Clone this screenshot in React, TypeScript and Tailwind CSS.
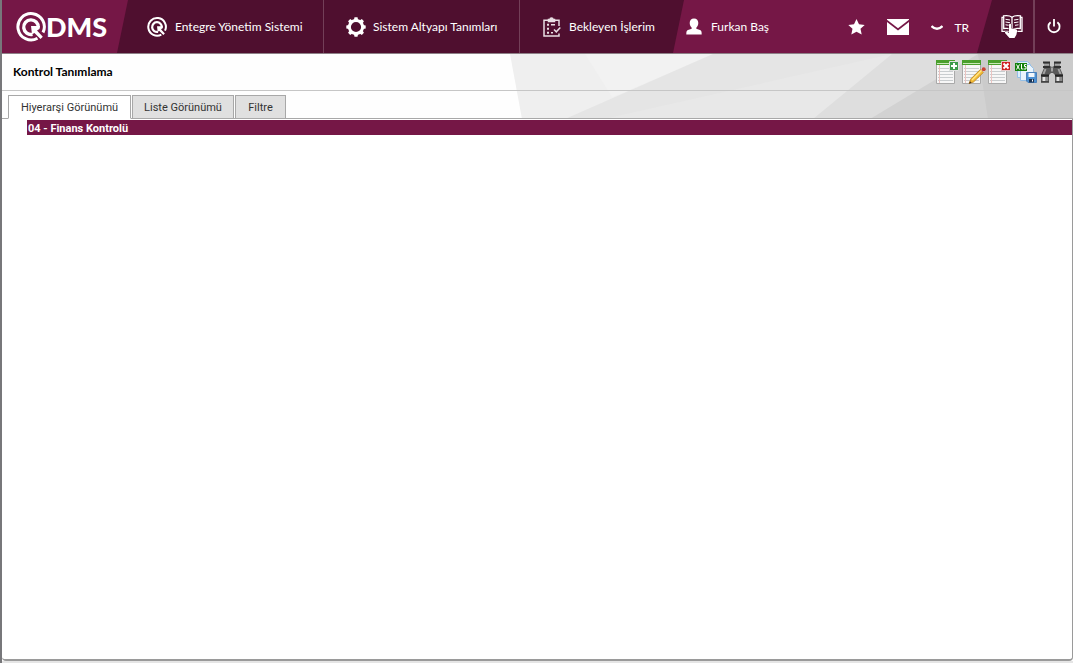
function QMark({ size }: { size: number }) {
  return (
    <svg width={size} height={size} viewBox="0 0 30 30" fill="none" aria-hidden="true">
      <path d="M21.500 26.300 A13.200 13.200 0 1 1 27 20.500" stroke="#fff" strokeWidth="3" />
      <path d="M16.500 22.300 A7.300 7.300 0 1 1 22.300 15.500" stroke="#fff" strokeWidth="3.400" />
      <path d="M15 14H24L23.500 17L21 18.500L26.800 24.800L24.500 27L18.500 21L16 22.300z" fill="#fff" />
    </svg>
  );
}

function GearIcon() {
  return (
    <svg width="20" height="20" viewBox="0 0 20 20" aria-hidden="true">
      <g fill="#fff">
        {[0, 45, 90, 135, 180, 225, 270, 315].map((a) => (
          <path key={a} d="M7.700 4 L8.500 0.300 H11.500 L12.300 4z" transform={`rotate(${a} 10 10)`} />
        ))}
      </g>
      <circle cx="10" cy="10" r="6.600" fill="none" stroke="#fff" strokeWidth="3" />
    </svg>
  );
}

function TasksIcon() {
  return (
    <svg width="18" height="20" viewBox="0 0 18 20" fill="none" stroke="#e9dfe4" strokeWidth="1.500" aria-hidden="true">
      <path d="M5 3.200 H1 V19 H16 V16.500 M12 3.200 H16 V9" />
      <path d="M5.500 4.500 V2.500 H7 A1.500 1.500 0 0 1 10 2.500 H11.500 V4.500z" fill="#e9dfe4" />
      <path d="M4 7.700h2M4 11.700h2M4 15.700h2" strokeWidth="2" />
      <path d="M8 7.700h4M8 15.700h2" />
      <path d="M11 12.500 l2.300 2.300 L17.300 10.500" />
    </svg>
  );
}

function UserIcon() {
  return (
    <svg width="16" height="17" viewBox="0 0 16 17" fill="#fff" aria-hidden="true">
      <path d="M8 0.500c2.800 0 4.300 2 4.300 4.500 0 2.300-.9 3.700-2 4.700v1l3.700 1.400c1.300.5 1.700 1.500 1.700 4.400H.3c0-2.900.4-3.900 1.700-4.400l3.700-1.400v-1c-1.100-1-2-2.400-2-4.700C3.700 2.500 5.200.5 8 .5z" />
    </svg>
  );
}

function StarIcon() {
  return (
    <svg width="17" height="16" viewBox="0 0 17 16" fill="#fff" aria-hidden="true">
      <path d="M8.500 0 L11 5.300 16.700 5.900 12.500 9.800 13.700 15.600 8.500 12.700 3.300 15.600 4.500 9.800 .3 5.900 6 5.300z" />
    </svg>
  );
}

function MailIcon() {
  return (
    <svg width="22" height="16" viewBox="0 0 22 16" fill="#fff" aria-hidden="true">
      <path d="M0 0H22V.8L11 9.300 0 .8z" />
      <path d="M0 3L11 11.500 22 3V16H0z" />
    </svg>
  );
}

function BookIcon() {
  return (
    <svg width="22" height="23" viewBox="0 0 22 23" aria-hidden="true">
      <g fill="none" stroke="#fff" strokeWidth="1.300">
        <path d="M8 16.300H1V2.300H2.500V.9C6 .4 9 .6 11 2.300 13 .6 16 .4 19.500.9V2.300H21V16.300H15" />
        <path d="M2.700 2V13.500C6 13 8 13.200 11 14.500 14 13.200 16 13 19.300 13.500V2M11 2.300V14" />
        <path d="M4.500 4.300L9 5M4.500 7L9 7.700M4.500 9.800L8 10.300M17.500 4.300L13 5M17.500 7L13 7.700M17.500 9.800L14 10.300" strokeWidth="1" />
      </g>
      <path d="M8 9.800c0-1.500 2.300-1.500 2.300 0v3.700l4.500.8c1 .2 1.400.9 1.300 1.900l-.7 3.600L13.500 23H8.500L4.200 18.200c-.9-1.400.6-2.300 1.700-1.400L8 18z" fill="#fff" stroke="#4f0f2f" strokeWidth=".8" paintOrder="stroke" />
    </svg>
  );
}

function PowerIcon() {
  return (
    <svg width="14" height="15" viewBox="0 0 14 15" fill="none" stroke="#fff" strokeWidth="1.800" aria-hidden="true">
      <path d="M3.600 3.200A5.600 5.600 0 1 0 10.400 3.200M7 0V7.500" />
    </svg>
  );
}

function Sheet() {
  return (
    <>
      <path d="M.5 2.500h18v21H.5z" fill="#f7f7f7" stroke="#a9a9a9" />
      <path d="M2 8.500h15M2 11.500h15M2 14.500h15M2 17.500h15M2 20.500h15" stroke="#c9cdcf" />
      <path d="M3.500 5v18" stroke="#ebc4c1" />
      <path d="M0 0h19v5H0z" fill="#4a9f2c" />
      <path d="M1 3h17v1H1z" fill="#c7e8b6" />
    </>
  );
}

function AddIcon() {
  return (
    <svg width="24" height="24" viewBox="0 0 24 24" aria-hidden="true">
      <Sheet />
      <path d="M13.500 1.500h9v9h-9z" fill="#3d9a4b" stroke="#e2e2e2" />
      <path d="M18 3v6M15 6h6" stroke="#fff" strokeWidth="2" />
    </svg>
  );
}

function EditIcon() {
  return (
    <svg width="24" height="24" viewBox="0 0 24 24" aria-hidden="true">
      <Sheet />
      <path d="M7 23.500L9 18.800 18.500 9.300 21.500 12.300 11.500 22z" fill="#f3bd35" stroke="#ba7d16" strokeWidth=".8" />
      <path d="M10 20L19.500 10.500" stroke="#ffe58b" strokeWidth="1.200" />
      <path d="M18.500 9.300l1.500-1.400 3 3-1.500 1.400z" fill="#d7dadc" />
      <circle cx="21.700" cy="9.200" r="2" fill="#c94335" />
      <path d="M7 23.700l1-2.500 1.600 1.500z" fill="#4a321b" />
    </svg>
  );
}

function DeleteIcon() {
  return (
    <svg width="24" height="24" viewBox="0 0 24 24" aria-hidden="true">
      <Sheet />
      <path d="M13.500 1.500h9v9h-9z" fill="#ce2021" stroke="#e8caca" />
      <path d="M15.500 3.500l5 5M20.500 3.500l-5 5" stroke="#fff" strokeWidth="2" />
    </svg>
  );
}

function ExportIcon() {
  return (
    <svg width="24" height="24" viewBox="0 0 24 24" aria-hidden="true">
      <path d="M3.500 1.500h10l3 3v13h-13z" fill="#dcecfa" stroke="#94bfe6" />
      <path d="M6.500 4.500h9l4 4v12h-13z" fill="#e9f4fd" stroke="#94bfe6" />
      <path d="M1 3h12v8H1z" fill="#12800d" />
      <path d="M2.500 4.500l3 5M5.500 4.500l-3 5M7.500 4v5h2M12.500 4.500h-2v2h1.500v2.500h-2" stroke="#fff" fill="none" />
      <path d="M12.500 12.500h10v10h-8.500l-1.500-1.500z" fill="#4e91d2" stroke="#4a80ba" />
      <path d="M14.500 13h6v4h-6z" fill="#f3f8fc" />
      <path d="M15 19h5v3.500h-5z" fill="#1c3554" />
      <path d="M18 19.500h1v2h-1z" fill="#fff" />
    </svg>
  );
}

function BinocularsIcon() {
  return (
    <svg width="24" height="24" viewBox="-1 0 24 24" aria-hidden="true">
      <path d="M3 2.500h6v3.500l2 1 2-1V2.500h6V8l3 7v7.500h-8V15l-2-2h-2l-2 2v7.500H0V15l3-7z" fill="#5a5a5a" />
      <path d="M2 2.500h7M13 2.500h7M2 7h7M13 7h7" stroke="#303030" strokeWidth="2" />
      <path d="M3 4.800h5M14 4.800h5M4.500 9l-2 5M17.500 9l2 5M11 7.500v4" stroke="#a4a4a4" strokeWidth="2" />
      <path d="M0 15.500h8M14 15.500h8" stroke="#252525" strokeWidth="2" />
      <path d="M3 17v4M17 17v4" stroke="#e4e4e4" strokeWidth="3" />
      <path d="M6 17v4M20 17v4" stroke="#9c9c9c" strokeWidth="1.500" />
      <path d="M0 22h8M14 22h8" stroke="#303030" />
    </svg>
  );
}

function Backdrop() {
  return (
    <svg className="absolute inset-0 -z-10 h-full w-full" viewBox="2 54 1071 65" preserveAspectRatio="none" aria-hidden="true">
      <path d="M2 54H1073V119H2z" fill="#fefefe" />
      <path d="M510 54H1073V119H522z" fill="#efefef" />
      <path d="M585 54H713L625 92 612 97z" fill="#f2f2f2" />
      <path d="M713 54H1073V119H565z" fill="#e5e5e5" />
      <path d="M892 54H1073V119H604z" fill="#e8e8e8" />
      <path d="M892 54H1073V119H813z" fill="#dedede" />
      <path d="M978 54H1073V119H870z" fill="#d2d2d2" />
      <path d="M978 54H1073V119H988z" fill="#cbcbcb" />
    </svg>
  );
}

const navItems = [
  { label: "Entegre Yönetim Sistemi", icon: <QMark size={20} />, box: "w-[207px] pl-[30px] gap-2 border-r" },
  { label: "Sistem Altyapı Tanımları", icon: <GearIcon />, box: "w-[196px] pl-[22px] gap-[7px] border-r" },
  { label: "Bekleyen İşlerim", icon: <TasksIcon />, box: "w-[164px] pl-[23px] gap-2" },
];

const tools = [
  { label: "Ekle", icon: <AddIcon /> },
  { label: "Düzenle", icon: <EditIcon /> },
  { label: "Sil", icon: <DeleteIcon /> },
  { label: "Excel olarak kaydet", icon: <ExportIcon /> },
  { label: "Ara", icon: <BinocularsIcon /> },
];

const tabs = [
  { label: "Hiyerarşi Görünümü", box: "w-[123px]" },
  { label: "Liste Görünümü", box: "w-[102px]" },
  { label: "Filtre", box: "w-[51px]" },
];

export default function App() {
  return (
    <div className="flex min-h-screen flex-col border-l-2 border-[#77777a] bg-white">
      <header className="flex h-[54px] items-stretch border-b border-[#8d8087] bg-[#751746] font-['Lato',sans-serif] text-xs text-white">
        <a href="#" aria-label="QDMS" className="flex w-[115px] shrink-0 items-center pl-[14px]">
          <QMark size={30} />
          <span className="text-[27px] leading-none font-black">DMS</span>
        </a>
        <nav className="flex shrink-0 bg-[#4f0f2f] [clip-path:polygon(11px_0,100%_0,calc(100%-11px)_100%,0_100%)]">
          {navItems.map((item) => (
            <a key={item.label} href="#" className={`flex items-center border-[#733f58] whitespace-nowrap ${item.box}`}>
              {item.icon}
              {item.label}
            </a>
          ))}
        </nav>
        <div className="flex flex-1 items-center pl-[2px]">
          <a href="#" className="flex items-center gap-[9px] whitespace-nowrap">
            <UserIcon />
            Furkan Baş
          </a>
          <div className="ml-auto flex items-center gap-[22px] pr-2">
            <button aria-label="Favoriler"><StarIcon /></button>
            <button aria-label="Mesajlar"><MailIcon /></button>
            <button className="flex items-center gap-[11px] pt-[3px]">
              <svg width="12" height="6" viewBox="0 0 12 6" fill="none" stroke="#fff" strokeWidth="2.400" aria-hidden="true">
                <path d="M.5 1Q6 6.500 11.500 1" />
              </svg>
              TR
            </button>
          </div>
        </div>
        <div className="flex shrink-0 bg-[#4f0f2f] [clip-path:polygon(15px_0,100%_0,100%_100%,0_100%)]">
          <button aria-label="Kılavuz" className="flex w-[58px] items-center border-r-2 border-[#733f58] pl-6"><BookIcon /></button>
          <button aria-label="Çıkış" className="flex w-[38px] items-center justify-center"><PowerIcon /></button>
        </div>
      </header>
      <main className="flex flex-1 flex-col font-['Roboto',sans-serif] text-[11px]">
        <div className="relative isolate">
          <Backdrop />
          <div className="flex h-[37px] items-center justify-between border-b border-[#c6c6c6] pr-[9px] pl-[11px]">
            <h1 className="font-['Lato',sans-serif] text-xs font-bold text-black">Kontrol Tanımlama</h1>
            <div className="flex gap-[2px]">
              {tools.map((tool) => (
                <button key={tool.label} aria-label={tool.label}>{tool.icon}</button>
              ))}
            </div>
          </div>
          <div role="tablist" className="flex h-7 items-end gap-px border-b border-[#a8a8a8] pl-[6px]">
            {tabs.map((tab, i) => (
              <button
                key={tab.label}
                role="tab"
                aria-selected={i === 0}
                className={`-mb-px h-6 border border-[#a8a8a8] pt-[2px] whitespace-nowrap text-[#333] ${tab.box} ${
                  i === 0 ? "border-b-white bg-white" : "bg-[#e0e0e0]"
                }`}
              >
                {tab.label}
              </button>
            ))}
          </div>
        </div>
        <div className="flex-1 rounded-b-sm border-r border-b-2 border-[#9a9a9a] pt-px pl-[25px]">
          <ul>
            <li className="h-[15px] bg-[#751746] pl-px leading-[17px] font-bold text-white">04 - Finans Kontrolü</li>
          </ul>
        </div>
      </main>
      <div className="h-[2px] bg-[#e5e5e5]" />
    </div>
  );
}
